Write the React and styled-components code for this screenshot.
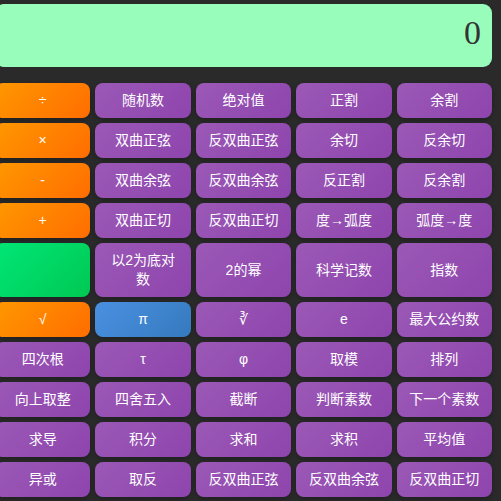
import styled, { createGlobalStyle } from "styled-components";

const GlobalStyle = createGlobalStyle`
    html, body {
        margin: 0;
        padding: 0;
        background: #2a2a2a;
        overflow: hidden;
    }
`;

const keys = [
    ["÷", "op"], ["随机数"], ["绝对值"], ["正割"], ["余割"],
    ["×", "op"], ["双曲正弦"], ["反双曲正弦"], ["余切"], ["反余切"],
    ["-", "op"], ["双曲余弦"], ["反双曲余弦"], ["反正割"], ["反余割"],
    ["+", "op"], ["双曲正切"], ["反双曲正切"], ["度→弧度"], ["弧度→度"],
    ["", "equal"], ["以2为底对数"], ["2的幂"], ["科学记数"], ["指数"],
    ["√", "op"], ["π", "pi"], ["∛"], ["e"], ["最大公约数"],
    ["四次根"], ["τ"], ["φ"], ["取模"], ["排列"],
    ["向上取整"], ["四舍五入"], ["截断"], ["判断素数"], ["下一个素数"],
    ["求导"], ["积分"], ["求和"], ["求积"], ["平均值"],
    ["异或"], ["取反"], ["反双曲正弦"], ["反双曲余弦"], ["反双曲正切"],
];

const backgrounds = {
    fn: "linear-gradient(135deg, #9b59b6, #8e44ad)",
    op: "linear-gradient(135deg, #ff9800, #ff6d00)",
    equal: "linear-gradient(135deg, #00e676, #00c853)",
    pi: "linear-gradient(135deg, #4a90e2, #357abd)",
};

export default function App() {
    return (
        <>
            <GlobalStyle />
            <Page>
                <Calculator>
                    <Display>0</Display>
                    <Keypad>
                        {keys.map(([label, kind = "fn"], i) => (
                            <Key key={i} $kind={kind}>
                                {label}
                            </Key>
                        ))}
                    </Keypad>
                </Calculator>
            </Page>
        </>
    );
}

const Page = styled.div`
    display: flex;
    justify-content: flex-end;
    width: 501px;
    height: 501px;
    overflow: hidden;
`;

const Calculator = styled.div`
    flex: 0 0 515px;
    box-sizing: border-box;
    padding: 4px 9px;
    display: flex;
    flex-direction: column;
    gap: 16px;
`;

const Display = styled.div`
    height: 64px;
    box-sizing: border-box;
    background: #98fdbb;
    border-radius: 9px;
    padding: 0 11px 6px;
    display: flex;
    align-items: center;
    justify-content: flex-end;
    font-family: "Liberation Serif", "DejaVu Serif", serif;
    font-size: 34px;
    color: #333;
`;

const Keypad = styled.div`
    display: grid;
    grid-template-columns: repeat(5, 1fr);
    gap: 5px;
`;

const Key = styled.button`
    border: none;
    border-radius: 8px;
    padding: 8px 10px;
    min-height: 35px;
    background: ${(p) => backgrounds[p.$kind]};
    color: #fff;
    font-family: "Liberation Sans", "Noto Sans CJK SC", sans-serif;
    font-size: 14px;
    line-height: 19px;
    text-align: center;
    box-shadow: 0 2px 4px rgba(0, 0, 0, 0.25);
    cursor: pointer;
`;
